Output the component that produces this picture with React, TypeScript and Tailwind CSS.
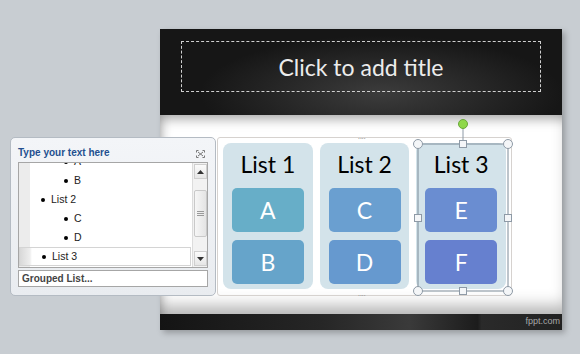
import React from "react";

const columns = [
  { title: "List 1", items: [{ t: "A", c: "bg-[#67aec8]" }, { t: "B", c: "bg-[#66a4ca]" }] },
  { title: "List 2", items: [{ t: "C", c: "bg-[#6a9fd0]" }, { t: "D", c: "bg-[#6699cf]" }] },
  { title: "List 3", items: [{ t: "E", c: "bg-[#6a8dd1]" }, { t: "F", c: "bg-[#6680cf]" }] },
];

const font = { fontFamily: "Lato, 'Open Sans', sans-serif" };
const ui = { fontFamily: "'Liberation Sans', Arial, sans-serif" };

const Circle = ({ x, y }: { x: number; y: number }) => (
  <circle cx={x} cy={y} r={4.5} fill="#f4f6f8" stroke="#8e9aa6" strokeWidth={1} />
);
const Square = ({ x, y }: { x: number; y: number }) => (
  <rect x={x - 3.5} y={y - 3.5} width={7} height={7} fill="#f4f6f8" stroke="#8e9aa6" strokeWidth={1} />
);

function Selection() {
  // overlay for the selected "List 3" shape, coords relative to smartart frame
  return (
    <svg className="absolute left-[194px] top-[-20px] pointer-events-none" width={104} height={180}>
      <line x1={51} y1={6} x2={51} y2={26} stroke="#8e9aa6" />
      <circle cx={51} cy={6} r={4.5} fill="#8fd84a" stroke="#6aa83a" />
      <rect x={6} y={26} width={90} height={147} fill="none" stroke="#7d8b98" strokeWidth={1} />
      <Circle x={6} y={26} />
      <Circle x={96} y={26} />
      <Circle x={6} y={173} />
      <Circle x={96} y={173} />
      <Square x={51} y={26} />
      <Square x={51} y={173} />
      <Square x={6} y={100} />
      <Square x={96} y={100} />
    </svg>
  );
}

function Slide() {
  return (
    <div className="w-[402px] h-[301px] flex flex-col shadow-[3px_3px_6px_rgba(0,0,0,0.25)]">
      {/* title band */}
      <div className="h-[86px] bg-[radial-gradient(ellipse_60%_90%_at_55%_75%,#3c3c3c,#161616_75%)] pt-[12px] px-[21px]">
        <div className="h-[51px] border border-dashed border-[#d0d0d0] flex items-center justify-center pt-[2px]">
          <span className="text-[#ececec] text-[23px]" style={font}>Click to add title</span>
        </div>
      </div>
      {/* content */}
      <div className="flex-1 bg-white shadow-[inset_6px_10px_12px_-6px_rgba(0,0,0,0.35),inset_0_-14px_16px_-6px_rgba(0,0,0,0.3)] pl-[57px] pt-[22px]">
        <div className="relative w-[295px] h-[159px] border border-[#d6d2cf] rounded-[3px] p-[5px] flex gap-[7px]">
          <span className="absolute top-[-5px] left-[140px] text-[7px] leading-none text-[#999]">....</span>
          <span className="absolute bottom-[-2px] left-[140px] text-[7px] leading-none text-[#999]">....</span>
          {columns.map((col) => (
            <div key={col.title} className="w-[90px] h-[146px] rounded-[8px] bg-[#d3e3ea] flex flex-col items-center pt-[6px]">
              <div className="text-[23px] leading-[30px] text-black" style={font}>{col.title}</div>
              <div className="mt-[9px] flex flex-col gap-[8px]">
                {col.items.map((it) => (
                  <div
                    key={it.t}
                    className={`w-[72px] h-[44px] rounded-[5px] ${it.c} flex items-center justify-center text-white text-[23px]`}
                    style={font}
                  >
                    {it.t}
                  </div>
                ))}
              </div>
            </div>
          ))}
          <Selection />
        </div>
      </div>
      {/* footer */}
      <div className="h-[16px] bg-[linear-gradient(90deg,#141414,#262626_40%,#3a3a3a_62%,#1c1c1c_79%,#2a2a2a_80%,#222)] flex items-center justify-end pr-[2px]">
        <span className="text-[9px] text-[#a8a8a8]" style={ui}>fppt.com</span>
      </div>
    </div>
  );
}

function Bullet({ indent, text, selected }: { indent: number; text: string; selected?: boolean }) {
  return (
    <div
      className={`h-[19px] flex items-center text-[10.5px] text-[#222] ${
        selected ? "border border-[#d4d4d4] bg-[linear-gradient(90deg,#d8d8d8_0px,#eeeeee_10px,#ffffff_12px)]" : ""
      }`}
      style={{ ...ui, paddingLeft: indent }}
    >
      <span className="w-[4px] h-[4px] rounded-full bg-black mr-[6px]" />
      {text}
    </div>
  );
}

function TextPane() {
  return (
    <div className="absolute left-[10px] top-[137px] w-[206px] h-[159px] rounded-[5px] border border-[#b4bbc3] bg-[linear-gradient(#f3f5f8,#e9ecf0)] px-[7px] pt-[4px]">
      <div className="flex items-center justify-between h-[20px]">
        <span className="text-[10px] font-bold text-[#23508f]" style={ui}>Type your text here</span>
        <svg width="9" height="8" viewBox="0 0 9 8" className="mr-[3px] mt-[4px]">
          <path d="M0.5 0.5h2M0.5 0.5v2M8.5 0.5h-2M8.5 0.5v2M0.5 7.5h2M0.5 7.5v-2M8.5 7.5h-2M8.5 7.5v-2M2 2l5 4M7 2l-5 4" stroke="#777" strokeWidth="1" fill="none" />
        </svg>
      </div>
      <div className="h-[106px] border border-[#a6a6a6] bg-white flex overflow-hidden">
        <div className="relative flex-1 overflow-hidden bg-[linear-gradient(90deg,#ececec_0px,#ececec_11px,#ffffff_11px)]">
          <div className="absolute top-[-11px] left-0 right-0">
            <Bullet indent={45} text="A" />
            <Bullet indent={45} text="B" />
            <Bullet indent={22} text="List 2" />
            <Bullet indent={45} text="C" />
            <Bullet indent={45} text="D" />
            <div className="mr-[1px]">
              <Bullet indent={22} text="List 3" selected />
            </div>
          </div>
        </div>
        <div className="w-[15px] border-l border-[#dcdcdc] bg-[#f2f2f2] flex flex-col items-center">
          <div className="h-[15px] w-[13px] mt-[1px] border border-[#cfcfcf] bg-[linear-gradient(#fbfbfb,#e6e6e6)] flex items-center justify-center">
            <svg width="7" height="4"><path d="M0 4L3.5 0L7 4Z" fill="#333" /></svg>
          </div>
          <div className="mt-[11px] h-[47px] w-[13px] border border-[#c9c9c9] rounded-[2px] bg-[linear-gradient(90deg,#f6f6f6,#e4e4e4)] flex items-center justify-center">
            <svg width="7" height="5"><path d="M0 0.5h7M0 2.5h7M0 4.5h7" stroke="#9a9a9a" /></svg>
          </div>
          <div className="flex-1" />
          <div className="h-[15px] w-[13px] mb-[1px] border border-[#cfcfcf] bg-[linear-gradient(#fbfbfb,#e6e6e6)] flex items-center justify-center">
            <svg width="7" height="4"><path d="M0 0L3.5 4L7 0Z" fill="#333" /></svg>
          </div>
        </div>
      </div>
      <div className="mt-[2px] h-[17px] border border-[#a6a6a6] bg-white flex items-center pl-[3px]">
        <span className="text-[10px] font-bold text-[#444]" style={ui}>Grouped List...</span>
      </div>
    </div>
  );
}

export default function App() {
  return (
    <div className="relative w-[580px] h-[354px] bg-[#c8cdd2] overflow-hidden pt-[29px] pl-[160px]">
      <Slide />
      <TextPane />
    </div>
  );
}
